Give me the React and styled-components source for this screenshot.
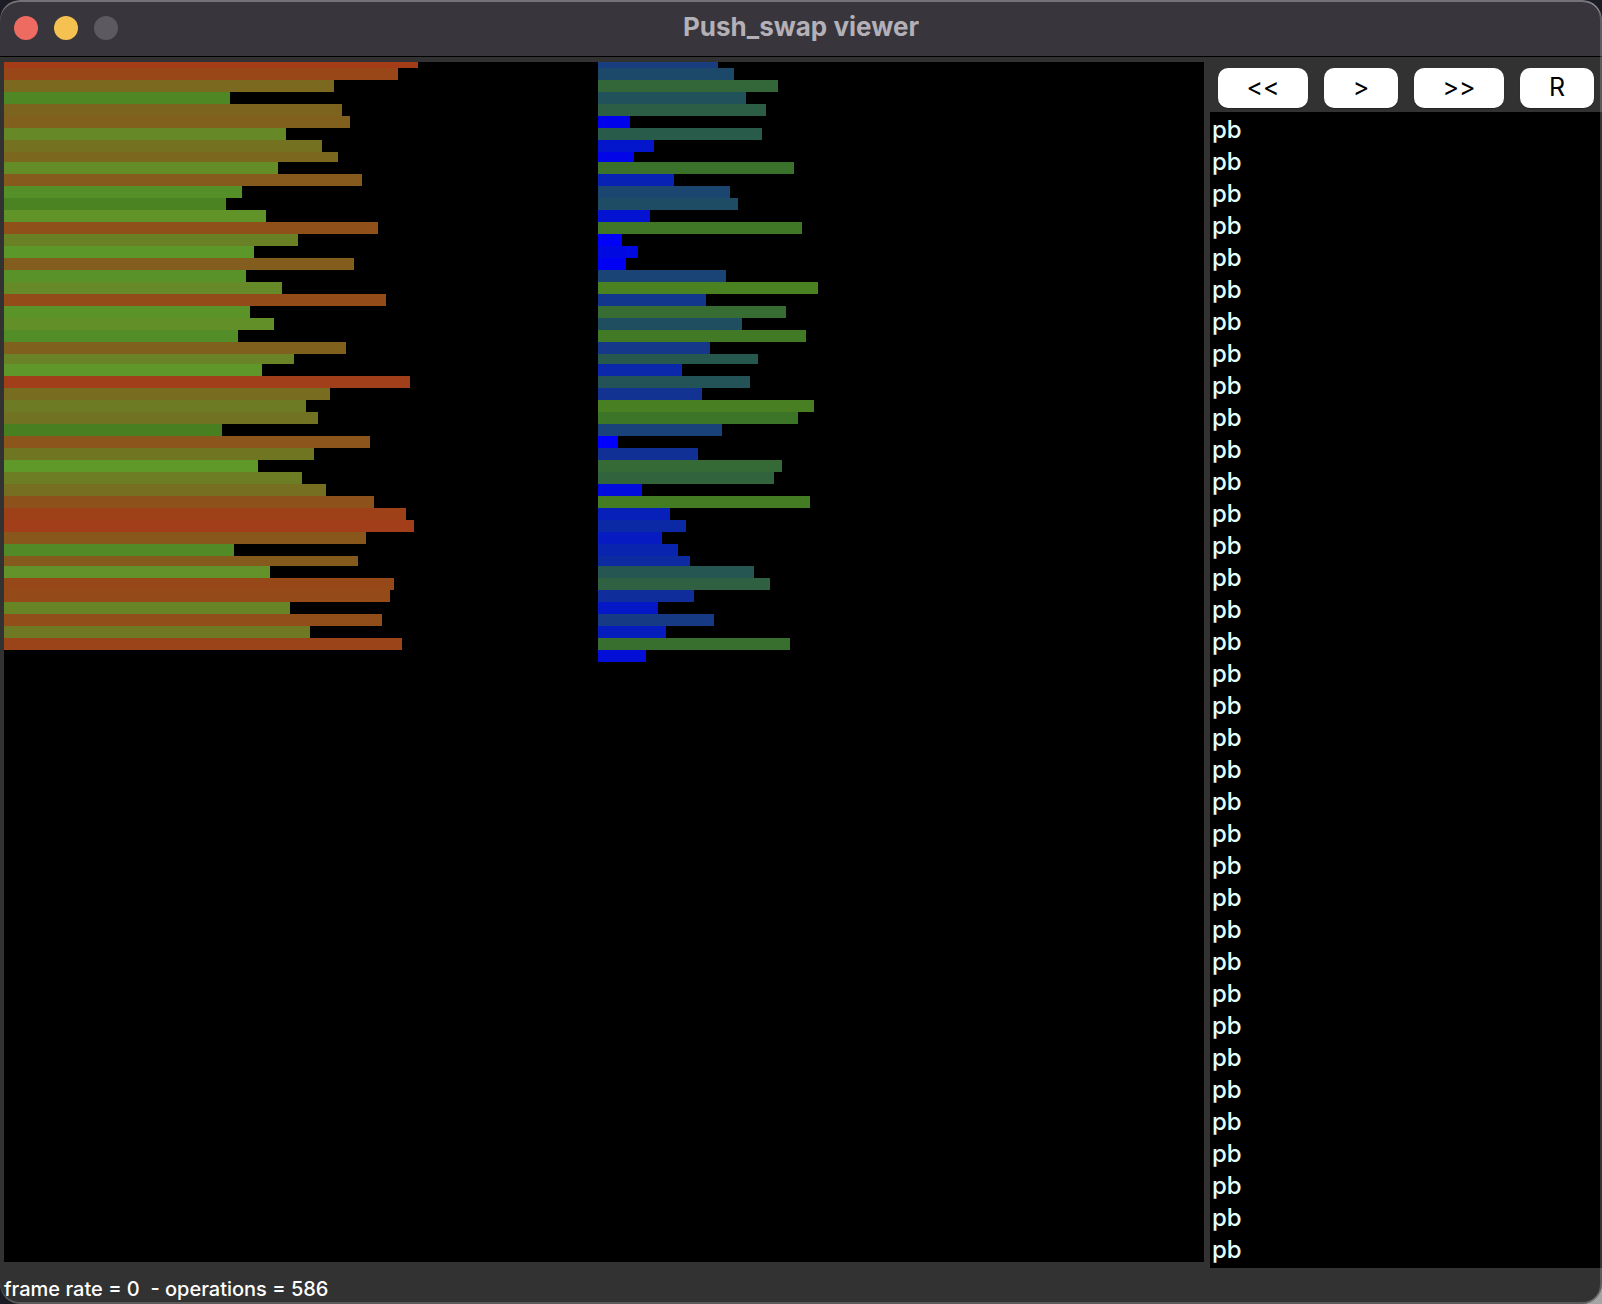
import React from "react";
import styled, { createGlobalStyle } from "styled-components";

const GlobalStyle = createGlobalStyle`
  *, *::before, *::after { box-sizing: border-box; }
  html, body { margin: 0; min-height: 100%; }
  body {
    background: linear-gradient(135deg, #1c1d24 0%, #1c1d24 90%, #a5a5a7 98%);
    font-family: Inter, "Liberation Sans", sans-serif;
  }
`;

const Window = styled.main`
  position: relative;
  display: flex;
  flex-direction: column;
  min-height: 100vh;
  background: #323232;
  border-radius: 20px;
  overflow: hidden;

  /* light rim around the window, over its content */
  &::after {
    content: "";
    position: absolute;
    inset: 0;
    border-radius: inherit;
    pointer-events: none;
    box-shadow:
      inset 0 2px 0 rgba(255, 255, 255, 0.3),
      inset -2px 0 0 rgba(255, 255, 255, 0.2),
      inset 0 -2px 0 rgba(255, 255, 255, 0.2);
  }
`;

const TitleBar = styled.header`
  display: grid;
  grid-template-columns: 1fr auto 1fr;
  align-items: center;
  height: 57px;
  padding: 0 14px;
  background: #38353c;
  border-bottom: 1px solid #000;
`;

const WindowControls = styled.div`
  display: flex;
  gap: 16px;
`;

const ControlDot = styled.button`
  width: 24px;
  height: 24px;
  padding: 0;
  border: 0;
  border-radius: 50%;
  background: ${(p) => p.$color};
`;

const Title = styled.h1`
  margin: 0;
  padding-bottom: 2px;
  font-size: 26px;
  line-height: 32px;
  font-weight: 700;
  color: #b3b0b7;
`;

const Workspace = styled.div`
  flex: 1;
  display: grid;
  grid-template-columns: minmax(0, 1fr) 392px;
  gap: 6px;
  padding: 5px 0 0 4px;
`;

const Canvas = styled.section`
  display: grid;
  grid-template-columns: 99fr 101fr;
  align-items: start;
  margin-bottom: 6px;
  background: #000;
`;

const Stack = styled.div`
  display: flex;
  flex-direction: column;
`;

const Bar = styled.div`
  height: ${(p) => p.$height}px;
`;

const SidePanel = styled.aside`
  display: flex;
  flex-direction: column;
`;

const Toolbar = styled.div`
  display: flex;
  gap: 16px;
  padding: 6px 8px 4px;
`;

const ToolButton = styled.button`
  flex: ${(p) => (p.$wide ? "90 1 0" : "74 1 0")};
  height: 40px;
  padding: 0 0 2px;
  border: 0;
  border-radius: 10px;
  background: #fff;
  color: #000;
  font-family: inherit;
  font-size: 25px;
  line-height: 38px;
  box-shadow: 0 1px 1px rgba(0, 0, 0, 0.3);
`;

const OperationList = styled.ul`
  flex: 1;
  margin: 0;
  padding: 2px;
  list-style: none;
  background: #000;
`;

const Operation = styled.li`
  font-size: 24px;
  line-height: 32px;
  font-weight: 500;
  color: #e0ffff;
`;

const StatusBar = styled.footer`
  padding: 6px 4px 0;
  font-size: 20px;
  line-height: 30px;
  font-weight: 500;
  color: #fff;
  white-space: pre;
`;

const stackA = [
  414, 394, 330, 226, 338, 346, 282, 318, 334, 274, 358, 238, 222, 262, 374,
  294, 250, 350, 242, 278, 382, 246, 270, 234, 342, 290, 258, 406, 326, 302,
  314, 218, 366, 310, 254, 298, 322, 370, 402, 410, 362, 230, 354, 266, 390,
  386, 286, 378, 306, 398,
];

const stackB = [
  120, 136, 180, 148, 168, 32, 164, 56, 36, 196, 76, 132, 140, 52, 204, 24, 40,
  28, 128, 220, 108, 188, 144, 208, 112, 160, 84, 152, 104, 216, 200, 124, 20,
  100, 184, 176, 44, 212, 72, 88, 64, 80, 92, 156, 172, 96, 60, 116, 68, 192,
  48,
];

// Colour ramp by bar length: [length, red, green, blue]
const ramp = [
  [20, 0, 0, 255],
  [32, 0, 2, 236],
  [44, 2, 12, 220],
  [56, 4, 22, 204],
  [76, 8, 34, 180],
  [100, 16, 48, 150],
  [120, 24, 62, 128],
  [140, 29, 76, 100],
  [160, 39, 88, 78],
  [180, 51, 102, 56],
  [200, 60, 116, 40],
  [218, 72, 128, 33],
  [230, 81, 138, 38],
  [254, 94, 153, 42],
  [278, 101, 138, 39],
  [294, 106, 128, 37],
  [310, 112, 117, 34],
  [326, 120, 108, 32],
  [342, 127, 97, 29],
  [358, 134, 89, 28],
  [374, 143, 80, 26],
  [390, 150, 72, 24],
  [406, 160, 63, 25],
  [414, 164, 60, 24],
];

function barColor(length) {
  const next = Math.max(1, ramp.findIndex(([stop]) => stop >= length));
  const from = ramp[next - 1];
  const to = ramp[next];
  const t = (length - from[0]) / (to[0] - from[0]);
  const mix = [1, 2, 3].map((c) => Math.round(from[c] + (to[c] - from[c]) * t));
  return `rgb(${mix.join(", ")})`;
}

// The first row is half hidden and every 17th one is rounded down
function barHeight(index) {
  if (index === 0) return 6;
  return index % 17 === 8 ? 10 : 12;
}

function StackView({ label, values }) {
  return (
    <Stack role="img" aria-label={label}>
      {values.map((value, index) => (
        <Bar
          key={value}
          $height={barHeight(index)}
          style={{ width: value, background: barColor(value) }}
        />
      ))}
    </Stack>
  );
}

const operations = Array.from({ length: 36 }, () => "pb");

export default function App() {
  return (
    <>
      <GlobalStyle />
      <Window>
        <TitleBar>
          <WindowControls>
            <ControlDot type="button" aria-label="Close" $color="#ed6b60" />
            <ControlDot type="button" aria-label="Minimize" $color="#f5c150" />
            <ControlDot type="button" aria-label="Zoom" $color="#5c5a60" />
          </WindowControls>
          <Title>Push_swap viewer</Title>
        </TitleBar>
        <Workspace>
          <Canvas>
            <StackView label="Stack A" values={stackA} />
            <StackView label="Stack B" values={stackB} />
          </Canvas>
          <SidePanel>
            <Toolbar>
              <ToolButton type="button" $wide>{"<<"}</ToolButton>
              <ToolButton type="button">{">"}</ToolButton>
              <ToolButton type="button" $wide>{">>"}</ToolButton>
              <ToolButton type="button">R</ToolButton>
            </Toolbar>
            <OperationList>
              {operations.map((name, index) => (
                <Operation key={index}>{name}</Operation>
              ))}
            </OperationList>
          </SidePanel>
        </Workspace>
        <StatusBar>{"frame rate = 0  - operations = 586"}</StatusBar>
      </Window>
    </>
  );
}
